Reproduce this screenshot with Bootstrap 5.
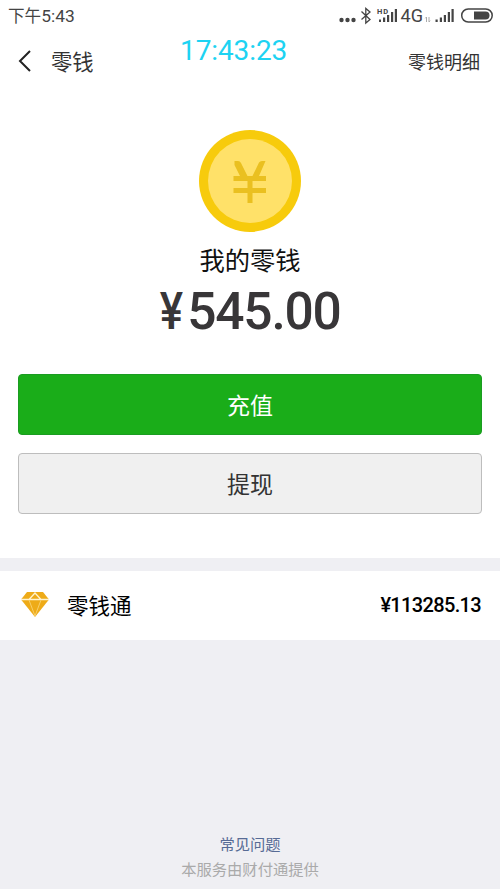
<!DOCTYPE html>
<html lang="zh-CN">
<head>
<meta charset="utf-8">
<meta name="viewport" content="width=device-width, initial-scale=1">
<title>零钱</title>
<link href="https://cdn.jsdelivr.net/npm/bootstrap@5.3.0/dist/css/bootstrap.min.css" rel="stylesheet">
<style>
body{font-family:"Noto Sans CJK SC",sans-serif;background:#efeff3;color:#333;line-height:1;height:889px;overflow:hidden}
.status-bar{height:32px;padding:0 7px 0 8px;font-size:16.6px;color:#444;font-family:Roboto,"Noto Sans CJK SC",sans-serif}
.status-time{padding-top:2px}
.status-digits{font-size:17.4px}
.status-icons{height:32px}
.top-bar{height:58px;padding:0 20px 0 18px}
.page-title{font-size:21.3px;margin-left:19px}
.detail-link{font-size:18px;color:#333}
.clock-overlay{position:absolute;left:180px;top:36px;font:28px/30px Roboto,sans-serif;color:#1dd3f2;letter-spacing:-.1px}
.wallet{height:468px;padding:40px 18px 0}
.wallet-name{font-size:25.3px;line-height:30px;margin-top:12px;color:#111}
.wallet-sum{font:500 51.5px/60px Roboto,sans-serif;margin-top:8px;color:#383638;letter-spacing:-1.2px}
.wallet-sum .yen{font-size:51px;display:inline-block;transform:scaleX(.86);transform-origin:right;margin-right:5px;margin-left:-3px}
.action{height:61px;font-size:23px;border-radius:4px;line-height:1;padding:0}
.action-fill{background:#1aad19;border-color:#1b9c22;color:#fff;margin-top:32px}
.action-plain{background:#f0f0f0;border-color:#bdbdbd;color:#333;margin-top:18px}
.fund-row{height:69px;margin-top:13px;padding:0 19px 2px 21px;color:#000}
.fund-name{font-size:21.5px;margin-left:18px}
.fund-sum{font:500 20px/24px Roboto,sans-serif;letter-spacing:-.65px}
.faq{font-size:15.3px;color:#576b95}
.provider{font-size:15.3px;color:#aaa}
.page-foot{gap:9px;padding-bottom:13px}
</style>
<script src="https://cdn.jsdelivr.net/npm/bootstrap@5.3.0/dist/js/bootstrap.bundle.min.js"></script>
</head>
<body class="d-flex flex-column position-relative">
<header class="bg-white">
  <div class="status-bar d-flex align-items-center justify-content-between">
    <span class="status-time">下午<span class="status-digits">5:43</span></span>
    <svg class="status-icons" width="156" height="32" viewBox="337 0 156 32" fill="#444">
      <circle cx="341.500" cy="20" r="2.200"/><circle cx="347.500" cy="20" r="2.200"/><circle cx="353.500" cy="20" r="2.200"/>
      <path d="M361.500 11.500l8.500 8-4.200 3.500V8.500l4.200 3.500-8.500 7.500" fill="none" stroke="#444" stroke-width="1.300"/>
      <text x="377" y="13.500" font-size="7.500" font-weight="700" textLength="11">HD</text>
      <path d="M379 19.500h2V22h-2zM383 17.500h2.200V22H383zM387 15h2.200v7H387zM391 12h2.200v10H391zM394.800 9h2.200v13h-2.200z"/>
      <text x="400.500" y="22" font-size="18" textLength="22.500" lengthAdjust="spacingAndGlyphs">4G</text>
      <path d="M426.500 17v5M425.300 18.300l1.200-1.300M429 17v5m0 0l1.200-1.300" fill="none" stroke="#aaa"/>
      <path d="M435.500 19.500h2.200V22h-2.200zM439.800 17.500h2.200V22h-2.200zM443.800 15h2.200v7h-2.200zM447.800 12h2.200v10h-2.200zM451.500 9h2.200v13h-2.200z"/>
      <rect x="461.700" y="9" width="30.500" height="13" rx="6.500" fill="none" stroke="#444" stroke-width="1.500"/>
      <path d="M474 11.500h11.500a4 4 0 0 1 0 8H474z"/>
    </svg>
  </div>
  <nav class="top-bar d-flex align-items-center">
    <svg width="14" height="22" viewBox="0 0 14 22" fill="none" stroke="#222" stroke-width="2"><path d="M12 1L2 11l10 10"/></svg>
    <span class="page-title">零钱</span>
    <span class="detail-link ms-auto">零钱明细</span>
  </nav>
</header>
<div class="clock-overlay">17:43:23</div>
<main class="wallet bg-white d-flex flex-column align-items-center">
  <svg class="flex-shrink-0" width="102" height="102" viewBox="0 0 102 102">
    <circle cx="51" cy="51" r="51" fill="#f7cb0c"/><circle cx="51" cy="51" r="42" fill="#ffe169"/>
    <path d="M35.500 31h3.500q2 0 3 2L48.500 46h5L60 32.500q1-1.500 3-1.500h3.500L60 46h7v5H53.500v7H67v5H53.500v10h-5V63H34.500v-5h14v-7h-14v-5h6.500L35.500 35z" fill="#eac020"/>
  </svg>
  <div class="wallet-name">我的零钱</div>
  <div class="wallet-sum"><span class="yen">¥</span>545.00</div>
  <button class="btn action action-fill w-100">充值</button>
  <button class="btn action action-plain w-100">提现</button>
</main>
<section class="fund-row bg-white d-flex align-items-center">
  <svg width="28" height="25" viewBox="0 0 28 25"><path d="M6 0h16l6 7.500L14 25 0 7.500z" fill="#eeab18"/><path d="M0 7.500h28M8 7.500L14 1l6 6.500" fill="none" stroke="#fff3cf" stroke-width="1.300"/><path d="M8 8l6 16 6-16" fill="none" stroke="#f8cf6a"/></svg>
  <span class="fund-name">零钱通</span>
  <span class="fund-sum ms-auto">¥113285.13</span>
</section>
<footer class="page-foot mt-auto d-flex flex-column align-items-center">
  <span class="faq">常见问题</span>
  <span class="provider">本服务由财付通提供</span>
</footer>
</body>
</html>
